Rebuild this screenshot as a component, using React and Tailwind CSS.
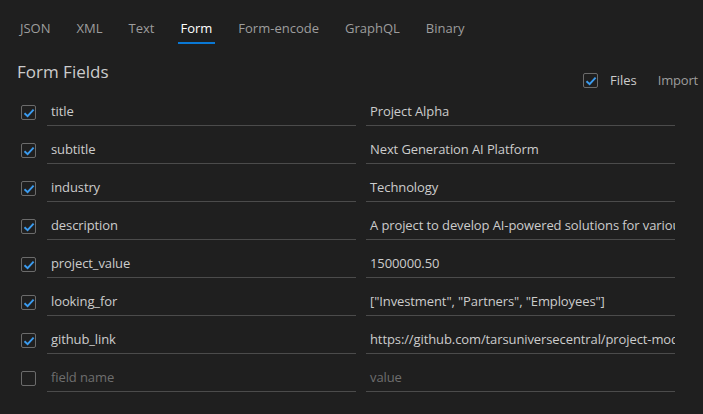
import React from "react";

const tabs = ["JSON", "XML", "Text", "Form", "Form-encode", "GraphQL", "Binary"];
const rows = [
  ["title", "Project Alpha"],
  ["subtitle", "Next Generation AI Platform"],
  ["industry", "Technology"],
  ["description", "A project to develop AI-powered solutions for various industries"],
  ["project_value", "1500000.50"],
  ["looking_for", '["Investment", "Partners", "Employees"]'],
  ["github_link", "https://github.com/tarsuniversecentral/project-model"],
];

function Check({ checked }) {
  return (
    <div className="w-[15px] h-[15px] shrink-0 rounded-[2px] border border-[#6b6b6b] flex items-center justify-center">
      {checked && (
        <svg width="12" height="12" viewBox="0 0 12 12">
          <path d="M1.5 6.2 L4.6 9.2 L10.6 2.6" fill="none" stroke="#3b9cf0" strokeWidth="1.9" />
        </svg>
      )}
    </div>
  );
}

function Field({ value, placeholder }) {
  return (
    <div className="w-[309px] h-[29px] border-b border-[#4b4b4b] flex items-center pt-[2px] px-[4px] overflow-hidden whitespace-nowrap tracking-[-0.1px]">
      {value ? (
        <span className="text-[#cccccc]">{value}</span>
      ) : (
        <span className="text-[#6e6e6e]">{placeholder}</span>
      )}
    </div>
  );
}

export default function App() {
  return (
    <div className="w-[703px] h-[414px] bg-[#1f1f1f] overflow-hidden text-[13px]" style={{ fontFamily: '"Open Sans", sans-serif' }}>
      <div className="flex pl-[20px] gap-[26px] h-[44px] pt-[19px]">
        {tabs.map((t) => (
          <div key={t} className="relative h-[24px]">
            <span className={t === "Form" ? "text-white" : "text-[#9d9d9d]"}>{t}</span>
            {t === "Form" && <div className="absolute left-[-2px] right-[-3px] top-[23px] h-[2px] bg-[#0a78d4]" />}
          </div>
        ))}
      </div>
      <div className="flex items-start justify-between pl-[17px] pr-[5px] h-[53px] pt-[16px]">
        <div className="text-[17px] text-[#cccccc] leading-[24px]">Form Fields</div>
        <div className="flex items-center mt-[11px]">
          <Check checked />
          <span className="ml-[12px] text-[#cccccc]">Files</span>
          <span className="ml-[21px] text-[#9d9d9d] tracking-[-0.2px]">Import</span>
        </div>
      </div>
      <div className="flex flex-col">
        {rows.map(([k, v]) => (
          <div key={k} className="flex items-center h-[38px] pl-[21px]">
            <div className="h-[29px] flex items-center mt-[-7px]"><Check checked /></div>
            <div className="flex gap-[10px] ml-[11px] self-start">
              <Field value={k} />
              <Field value={v} />
            </div>
          </div>
        ))}
        <div className="flex items-center h-[38px] pl-[21px]">
          <div className="h-[29px] flex items-center mt-[-7px]"><Check /></div>
          <div className="flex gap-[10px] ml-[11px] self-start">
            <Field placeholder="field name" />
            <Field placeholder="value" />
          </div>
        </div>
      </div>
    </div>
  );
}
